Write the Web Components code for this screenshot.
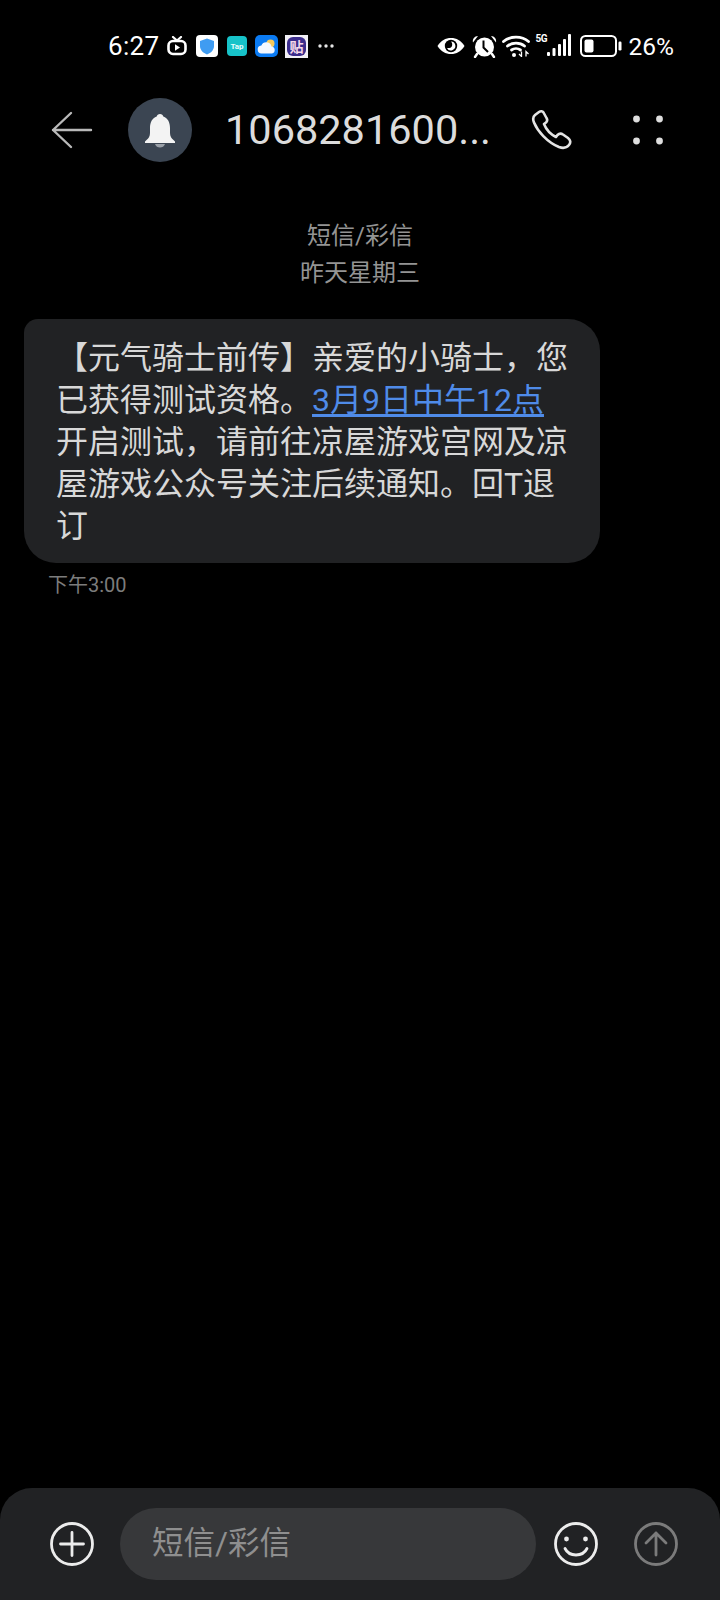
<!DOCTYPE html>
<html lang="zh-CN">
<head>
<meta charset="utf-8">
<title>短信</title>
<style>
  html, body { margin: 0; height: 100%; background: #000; }
  body { font-family: Roboto, "Noto Sans CJK SC", sans-serif; }
  sms-app { height: 1600px; }
</style>
</head>
<body>
<sms-app>
  <sms-status-bar time="6:27" battery="26%"></sms-status-bar>
  <sms-header number="1068281600..."></sms-header>
  <sms-date-label kind="短信/彩信" day="昨天星期三"></sms-date-label>
  <sms-bubble time="下午3:00"><span>【元气骑士前传】亲爱的小骑士，您</span><span>已获得测试资格。</span><a href="#">3月9日中午12点</a><span>开启测试，请前往凉屋游戏宫网及凉屋游戏公众号关注后续通知。回T退订</span></sms-bubble>
  <sms-composer placeholder="短信/彩信"></sms-composer>
</sms-app>

<script>
const define = (name, html, init) => {
  customElements.define(name, class extends HTMLElement {
    constructor() {
      super();
      const shadow = this.attachShadow({ mode: 'open' });
      shadow.innerHTML = html;
    }
    connectedCallback() {
      if (init) init(this, this.shadowRoot);
    }
  });
}

define('sms-app', `
  <style>
    :host { display: flex; flex-direction: column; background: #000; overflow: hidden; }
    ::slotted(sms-composer) { margin-top: auto; }
  </style>
  <slot></slot>
`);

define('sms-status-bar', `
  <style>
    :host {
      display: flex;
      align-items: center;
      height: 92px;
      padding: 0 46px 0 108px;
      color: #fff;
      font-size: 26px;
    }
    svg { display: block; flex: none; }
    .app {
      flex: none;
      display: flex;
      align-items: center;
      justify-content: center;
      overflow: hidden;
    }
    #shield { width: 22px; height: 22px; margin-left: 9px; background: #fff; border-radius: 4px; }
    #tap {
      width: 20px; height: 20px; margin-left: 9px; background: #17c3c9; border-radius: 4px;
      font: 700 8px Roboto, sans-serif; color: #e8ffff;
    }
    #weather { width: 23px; height: 22px; margin-left: 8px; background: #0b7bf3; border-radius: 5px; }
    #tie {
      width: 23px; height: 23px; margin-left: 7px; background: #f2f0f6;
    }
    #tie span {
      width: 19px; height: 19px; border-radius: 6px; background: #3b2c8c; color: #f6d9ea;
      font: 700 14px/19px "Noto Sans CJK SC", sans-serif; text-align: center;
    }
    #time { letter-spacing: .3px; width: 50px; }
    #more { margin-left: 10px; }
    #right { margin-left: auto; display: flex; align-items: center; }
    #net { display: flex; align-items: flex-start; margin-left: 6px; }
    #five { font: 700 10px/10px Roboto, sans-serif; width: 11px; margin-top: -1px; letter-spacing: -.4px; }
    #pct { margin-left: 7px; font-size: 24.500px; }
  </style>
  <span id="time"></span>
  <svg width="20" height="20" viewBox="0 0 20 20" style="margin-left:9px">
    <path d="M6 1l4 3.500L14 1" fill="none" stroke="#fff" stroke-width="2.200" stroke-linecap="round"/>
    <rect x="1.500" y="5" width="17" height="13" rx="4.500" fill="none" stroke="#fff" stroke-width="2.600"/>
    <path d="M8 8.200l5 3.300-5 3.300z" fill="#fff"/>
  </svg>
  <span class="app" id="shield">
    <svg width="16" height="17" viewBox="0 0 16 17"><path d="M8 .5l7 2.400v5.200c0 4-3 6.900-7 8.400-4-1.500-7-4.400-7-8.400V2.900z" fill="#3f9cf2"/></svg>
  </span>
  <span class="app" id="tap">Tap</span>
  <span class="app" id="weather">
    <svg width="20" height="17" viewBox="0 0 20 17">
      <circle cx="13.500" cy="5.500" r="4" fill="#f4c95d"/>
      <path d="M5 15.500a4 4 0 0 1-.6-8A5.300 5.300 0 0 1 14.500 8.600a3.500 3.500 0 0 1 .5 6.900z" fill="#f4f8ff"/>
    </svg>
  </span>
  <span class="app" id="tie"><span>贴</span></span>
  <svg id="more" width="16" height="4" viewBox="0 0 16 4" fill="#e6e6e6">
    <circle cx="2" cy="2" r="1.700"/><circle cx="8" cy="2" r="1.700"/><circle cx="14" cy="2" r="1.700"/>
  </svg>
  <div id="right">
    <svg width="28" height="18" viewBox="0 0 28 18">
      <path d="M.5 9C4 3.600 8.500 1 14 1s10 2.600 13.500 8C24 14.400 19.500 17 14 17S4 14.400.5 9z" fill="#fff"/>
      <circle cx="14" cy="9" r="6.200" fill="#000"/>
      <path d="M14 4.600a4.400 4.400 0 1 1-4 6.300c1.800.5 4.300-.1 5-2 .5-1.400.2-3-1-4.300z" fill="#fff"/>
    </svg>
    <svg width="25" height="23" viewBox="0 0 25 23" style="margin-left:7px">
      <path d="M1 7.500C.2 4 2.500 1 6 1zM24 7.500C24.800 4 22.500 1 19 1z" fill="#fff"/>
      <circle cx="12.500" cy="12" r="9.500" fill="#fff"/>
      <path d="M11.500 5.500v7l4.500 4.500" fill="none" stroke="#000" stroke-width="2"/>
      <path d="M5 19l-2 3M20 19l2 3" stroke="#fff" stroke-width="2.400" stroke-linecap="round"/>
    </svg>
    <svg width="28" height="22" viewBox="0 0 28 22" style="margin-left:5px" fill="none" stroke="#fff" stroke-width="2.800" stroke-linecap="round">
      <path d="M1.500 6.500C8 .7 20 .7 26.500 6.500"/>
      <path d="M5.500 11c4.500-3.800 12.500-3.800 17 0"/>
      <path d="M9.500 15c2.500-1.800 6.500-1.800 9 0"/>
      <circle cx="12" cy="20" r="2" fill="#fff" stroke="none"/>
      <path d="M19.500 16.500v5l-2.500-2.500M24 21.500v-5l2.500 2.500" stroke-width="1.300" stroke-linecap="butt"/>
    </svg>
    <div id="net">
      <span id="five">5G</span>
      <svg width="24" height="23" viewBox="0 0 24 23" fill="#fff" style="margin-top:-1px">
        <rect x="0" y="18" width="3" height="4" rx="1"/>
        <rect x="5.500" y="14" width="3" height="8" rx="1"/>
        <rect x="11" y="10" width="3" height="12" rx="1"/>
        <rect x="16" y="5" width="3" height="17" rx="1"/>
        <rect x="21" y="0" width="3" height="22" rx="1"/>
      </svg>
    </div>
    <svg width="42" height="22" viewBox="0 0 42 22" style="margin-left:9px">
      <rect x="1" y="1" width="35" height="20" rx="4.500" fill="none" stroke="#fff" stroke-width="2"/>
      <rect x="4.500" y="4.500" width="9" height="13" rx="2" fill="#fff"/>
      <rect x="38.500" y="6.500" width="3" height="9" rx="1.200" fill="#fff"/>
    </svg>
    <span id="pct"></span>
  </div>
`, (host, root) => {
  root.querySelector('#time').textContent = host.getAttribute('time');
  root.querySelector('#pct').textContent = host.getAttribute('battery');
});

define('sms-header', `
  <style>
    :host {
      display: flex;
      align-items: center;
      height: 76px;
      padding: 0 0 0 51px;
      color: #dcdcdc;
    }
    svg { display: block; flex: none; }
    #avatar {
      flex: none;
      width: 64px; height: 64px;
      margin-left: 35px;
      border-radius: 50%;
      background: #3b4552;
    }
    #number {
      width: 272px;
      margin-left: 33px;
      font-size: 41.500px;
      line-height: 76px;
      white-space: nowrap;
    }
    #phone { margin-left: 34px; }
    #menu { margin-left: 60px; }
  </style>
  <svg width="42" height="40" viewBox="0 0 42 40" fill="none" stroke="#b9b9b9" stroke-width="2.400" stroke-linecap="round" stroke-linejoin="round">
    <path d="M40 20H2M20 3L2 20l18 17"/>
  </svg>
  <div id="avatar">
    <svg width="64" height="64" viewBox="0 0 64 64">
      <path d="M32 16c-1.800 0-3 1-3.300 2.400C24 20 22 24.500 22 30v5c0 3.500-1.500 5.500-3.500 7L17 43.500V45h30v-1.500L45.500 42C43.500 40.500 42 38.500 42 35v-5c0-5.500-2-10-6.700-11.600C35 17 33.800 16 32 16z" fill="#f3f3f3"/>
      <path d="M27 46h10c-.8 2.500-2.700 3.500-5 3.500s-4.200-1-5-3.500z" fill="#9aa0a8"/>
    </svg>
  </div>
  <span id="number"></span>
  <svg id="phone" width="42" height="42" viewBox="0 0 42 42" fill="none" stroke="#e4e4e4" stroke-width="2.600" stroke-linejoin="round">
    <path d="M8 3L4 6C1.500 8 2 11 3 13.500 6.500 22 16 33 28 38c4 1.500 7.500 1 10-2 2-2.500 1.500-5-1-7l-5-3.500c-2-1.500-4-1-5.500.5L25 28c-6-3-10-8-12-13l2-1.500c1.500-1.500 1.500-3 .5-4.500l-3-5.500C11.500 2 9.500 2 8 3z"/>
  </svg>
  <svg id="menu" width="30" height="32" viewBox="0 0 30 32" fill="#dedede">
    <circle cx="3.500" cy="5" r="3.400"/><circle cx="26.500" cy="5" r="3.400"/>
    <circle cx="3.500" cy="27" r="3.400"/><circle cx="26.500" cy="27" r="3.400"/>
  </svg>
`, (host, root) => {
  root.querySelector('#number').textContent = host.getAttribute('number');
});

define('sms-date-label', `
  <style>
    :host {
      display: block;
      padding-top: 50px;
      font-family: Roboto, "Noto Sans CJK SC", sans-serif;
      font-size: 24px;
      line-height: 37px;
      color: #949494;
      text-align: center;
    }
    div { height: 37px; }
  </style>
  <div id="kind"></div>
  <div id="day"></div>
`, (host, root) => {
  root.querySelector('#kind').textContent = host.getAttribute('kind');
  root.querySelector('#day').textContent = host.getAttribute('day');
});

define('sms-bubble', `
  <style>
    :host {
      display: block;
      padding: 27px 0 0 24px;
      font-family: Roboto, "Noto Sans CJK SC", sans-serif;
    }
    #box {
      box-sizing: border-box;
      width: 576px;
      padding: 18px 32px 16px 32px;
      border-radius: 32px;
      border-top-left-radius: 14px;
      background: #212224;
      color: #d8d8d8;
      font-size: 32px;
      line-height: 42px;
    }
    ::slotted(a) { color: #4f8be8; text-decoration: underline; text-underline-offset: 3px; }
    #time {
      margin: 9px 0 0 24px;
      font-size: 20px;
      line-height: 26px;
      color: #7c7c7c;
    }
  </style>
  <div id="box"><slot></slot></div>
  <div id="time"></div>
`, (host, root) => {
  root.querySelector('#time').textContent = host.getAttribute('time');
});

define('sms-composer', `
  <style>
    :host {
      display: flex;
      align-items: center;
      box-sizing: border-box;
      height: 112px;
      padding: 0 42px 0 50px;
      border-radius: 32px 32px 0 0;
      background: #212224;
    }
    svg { display: block; flex: none; }
    #field {
      flex: none;
      box-sizing: border-box;
      width: 416px;
      height: 72px;
      margin: 0 18px 0 26px;
      padding-left: 32px;
      border-radius: 36px;
      background: #37383a;
      color: #8f8f8f;
      font-family: Roboto, "Noto Sans CJK SC", sans-serif;
      font-size: 31.500px;
      line-height: 72px;
    }
    #send { margin-left: 36px; }
  </style>
  <svg width="44" height="44" viewBox="0 0 44 44" fill="none" stroke="#ececec" stroke-width="2.800">
    <circle cx="22" cy="22" r="20.500"/>
    <path d="M10.500 22h23M22 10.500v23" stroke-linecap="round"/>
  </svg>
  <div id="field"></div>
  <svg width="44" height="44" viewBox="0 0 44 44" fill="none" stroke="#ececec" stroke-width="2.800">
    <circle cx="22" cy="22" r="20.500"/>
    <circle cx="12.500" cy="17" r="2.400" fill="#ececec" stroke="none"/>
    <circle cx="31.500" cy="17" r="2.400" fill="#ececec" stroke="none"/>
    <path d="M11 26.500c2 4 6 6.500 11 6.500s9-2.500 11-6.500" stroke-linecap="round"/>
  </svg>
  <svg id="send" width="44" height="44" viewBox="0 0 44 44" fill="none" stroke="#7b7b7b" stroke-width="2.800" stroke-linecap="round" stroke-linejoin="round">
    <circle cx="22" cy="22" r="20.500"/>
    <path d="M22 33V11M12 21l10-10 10 10"/>
  </svg>
`, (host, root) => {
  root.querySelector('#field').textContent = host.getAttribute('placeholder');
});
</script>
</body>
</html>
